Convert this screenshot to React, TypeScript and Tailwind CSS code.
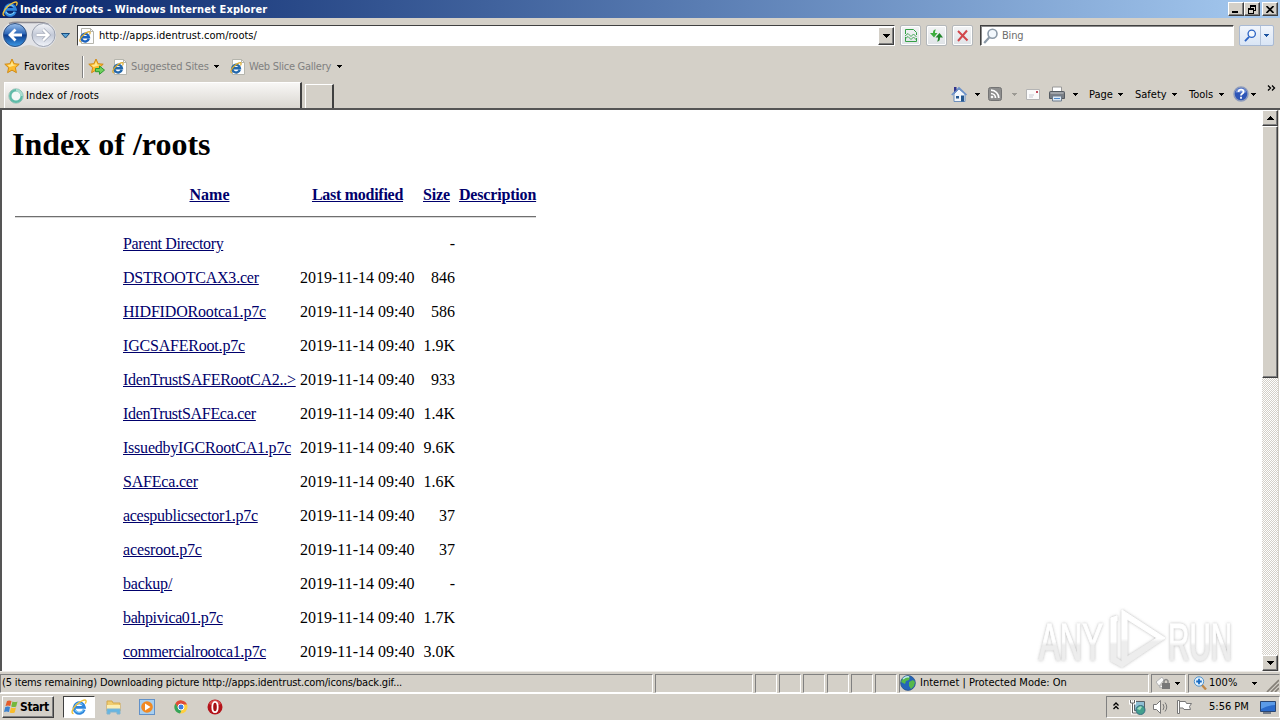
import type { ReactNode } from 'react';

interface Entry {
    name: string;
    date: string;
    size: string;
    tracking: string;
}

const entries: Entry[] = [
    { name: 'Parent Directory', date: '', size: '-', tracking: 'tracking-[-0.37px]' },
    { name: 'DSTROOTCAX3.cer', date: '2019-11-14 09:40', size: '846', tracking: 'tracking-[-0.22px]' },
    { name: 'HIDFIDORootca1.p7c', date: '2019-11-14 09:40', size: '586', tracking: 'tracking-[-0.18px]' },
    { name: 'IGCSAFERoot.p7c', date: '2019-11-14 09:40', size: '1.9K', tracking: 'tracking-[-0.2px]' },
    { name: 'IdenTrustSAFERootCA2..>', date: '2019-11-14 09:40', size: '933', tracking: 'tracking-[-0.28px]' },
    { name: 'IdenTrustSAFEca.cer', date: '2019-11-14 09:40', size: '1.4K', tracking: 'tracking-[-0.3px]' },
    { name: 'IssuedbyIGCRootCA1.p7c', date: '2019-11-14 09:40', size: '9.6K', tracking: 'tracking-[-0.22px]' },
    { name: 'SAFEca.cer', date: '2019-11-14 09:40', size: '1.6K', tracking: 'tracking-[-0.2px]' },
    { name: 'acespublicsector1.p7c', date: '2019-11-14 09:40', size: '37', tracking: 'tracking-[-0.29px]' },
    { name: 'acesroot.p7c', date: '2019-11-14 09:40', size: '37', tracking: 'tracking-[-0.13px]' },
    { name: 'backup/', date: '2019-11-14 09:40', size: '-', tracking: 'tracking-[-0.22px]' },
    { name: 'bahpivica01.p7c', date: '2019-11-14 09:40', size: '1.7K', tracking: 'tracking-[-0.37px]' },
    { name: 'commercialrootca1.p7c', date: '2019-11-14 09:40', size: '3.0K', tracking: 'tracking-[-0.36px]' },
];

const raised = 'border border-t-white border-l-white border-r-[#404040] border-b-[#404040] shadow-[inset_-1px_-1px_0_#808080] bg-[#d4d0c8]';
const sunken = 'border border-t-[#808080] border-l-[#808080] border-r-white border-b-white';

function Arrow({ className = '', color = '#000' }: { className?: string; color?: string }) {
    return (
        <svg className={`shrink-0 ${className}`} width="5" height="3" viewBox="0 0 5 3" shapeRendering="crispEdges">
            <path d="M0 0h5v1H4v1H3v1H2V2H1V1H0z" fill={color} />
        </svg>
    );
}

function IeLogo({ size = 16 }: { size?: number }) {
    return (
        <svg className="shrink-0" width={size} height={size} viewBox="0 0 16 16" fill="none">
            <path d="M13.2 10.6A5.2 5.2 0 1 1 13.4 8.4H4.6" stroke="#2f86dc" strokeWidth="2.9" />
            <path d="M12.3 11A4.7 4.7 0 0 1 4 11" stroke="#7fd0fa" strokeWidth="1.1" />
            <path d="M4.3 6.4A4.3 4.3 0 0 1 11.5 5.6" stroke="#8fd6fb" strokeWidth="1" />
            <path d="M2.6 14.6C-.4 14.4 1.4 9.5 5.5 5.7 9.4 2 14.3-.3 15 1.7c.3.8-.1 1.9-.8 3" stroke="#f0c23a" strokeWidth="1.4" />
        </svg>
    );
}

function IePage({ faded = false }: { faded?: boolean }) {
    return (
        <svg className="shrink-0" width="16" height="16" viewBox="0 0 16 16" fill="none">
            <path d="M2.5.5h9l3 3v12h-12z" fill="#fdfdfd" stroke="#b5b5ad" />
            <path d="M11.5.5v3h3" stroke="#b5b5ad" />
            <g transform="translate(0 3) scale(.74)">
                <path d="M13.2 10.6A5.2 5.2 0 1 1 13.4 8.4H4.6" stroke={faded ? '#2468ab' : '#1b62bd'} strokeWidth="3.2" />
                <path d="M2.6 14.6C-.4 14.4 1.4 9.5 5.5 5.7 9.4 2 14.3-.3 15 1.7c.3.8-.1 1.9-.8 3" stroke="#d9a92c" strokeWidth="1.6" />
            </g>
        </svg>
    );
}

function Star({ add = false }: { add?: boolean }) {
    return (
        <svg className="shrink-0" width="17" height="17" viewBox="0 0 17 17">
            <path d="M8 1l2.1 4.7 5.1.5-3.8 3.5 1 5L8 12.1l-4.4 2.6 1-5L.8 6.2l5.1-.5z" fill="#fdbb2d" stroke="#d18a14" />
            <path d="M8 3.2l1.3 3.4 3.2.3-6.9 2L3.4 7l3.2-.4z" fill="#ffe68b" />
            {add && <path d="M7.5 10.5h4V8l5 4.1-5 4.2v-2.6h-4z" fill="#6fd05c" stroke="#2d9b31" />}
        </svg>
    );
}

function Magnifier({ color, size = 16 }: { color: string; size?: number }) {
    return (
        <svg className="shrink-0" width={size} height={size} viewBox="0 0 16 16" fill="none">
            <path d="M6.2 9.6L1.2 15" stroke={color} strokeWidth="2.2" />
            <circle cx="9.5" cy="5.8" r="4.5" fill="#f3f8fd" stroke={color} strokeWidth="1.6" />
        </svg>
    );
}

function NavButton({ children }: { children: ReactNode }) {
    return (
        <div className="flex h-[21px] w-[21px] items-center justify-center rounded-[2px] border border-[#b4b8bb] bg-gradient-to-b from-[#f3f4f5] to-[#dfe3e7] shadow-[inset_0_0_0_1px_#fff]">
            {children}
        </div>
    );
}

function TitleBar() {
    return (
        <div className="flex h-[18px] items-center bg-gradient-to-r from-[#0a246a] to-[#a6caf0] pl-[2px] pr-[2px]">
            <IeLogo />
            <span className="ml-[2px] flex-1 pt-[2px] text-[11px] font-bold tracking-[0.12px] text-white">Index of /roots - Windows Internet Explorer</span>
            <div className={`flex h-[14px] w-4 items-end pb-[2px] pl-[3px] ${raised}`}>
                <div className="h-[2px] w-[6px] bg-black" />
            </div>
            <div className={`flex h-[14px] w-4 items-center justify-center ${raised}`}>
                <svg width="9" height="9" viewBox="0 0 9 9" shapeRendering="crispEdges">
                    <path d="M2 0h6v6H6V5h1V2H3v1H2zM0 3h6v6H0zM1 5v3h4V5z" fillRule="evenodd" />
                </svg>
            </div>
            <div className={`ml-[2px] flex h-[14px] w-4 items-center justify-center ${raised}`}>
                <svg width="8" height="7" viewBox="0 0 8 7">
                    <path d="M.5 0l7 7M7.5 0l-7 7" stroke="#000" strokeWidth="1.6" />
                </svg>
            </div>
        </div>
    );
}

function AddressRow() {
    return (
        <div className="flex h-[35px] items-center">
            <svg className="mb-[2px] ml-[2px] shrink-0" width="55" height="28" viewBox="0 0 55 28" fill="none">
                <defs>
                    <linearGradient id="back" x1="0" y1="0" x2="0" y2="1">
                        <stop offset="0" stopColor="#9bc0ec" />
                        <stop offset=".45" stopColor="#2c67b8" />
                        <stop offset=".5" stopColor="#0c3c8e" />
                        <stop offset="1" stopColor="#3c9be8" />
                    </linearGradient>
                    <linearGradient id="fwd" x1="0" y1="0" x2="0" y2="1">
                        <stop offset="0" stopColor="#f4f6fa" />
                        <stop offset=".5" stopColor="#c3c9d7" />
                        <stop offset="1" stopColor="#f2f5fb" />
                    </linearGradient>
                </defs>
                <path d="M13 1h28a13 13 0 0 1 0 26c-7 0-9-3-14-3s-7 3-14 3a13 13 0 0 1 0-26z" fill="#e2e3e7" />
                <path d="M7 2.3Q12 .8 20 1.5h14q8-.7 13 2" stroke="#8e8c93" strokeWidth="1.4" />
                <circle cx="13" cy="14" r="11.5" fill="url(#back)" stroke="#315180" />
                <circle cx="41.5" cy="14" r="11.5" fill="url(#fwd)" stroke="#9ba1af" />
                <path d="M20 14H8.5M13.5 8.5L8 14l5.5 5.5" stroke="#fff" strokeWidth="2.8" />
                <path d="M34.5 14H46M41 8.5l5.5 5.5-5.5 5.5" stroke="#9ca2b1" strokeWidth="3.6" />
                <path d="M34.5 14H46M41 8.5l5.5 5.5-5.5 5.5" stroke="#fff" strokeWidth="2.4" />
            </svg>
            <svg className="ml-[4px] shrink-0" width="9" height="6" viewBox="0 0 9 6">
                <path d="M.5.5h8l-4 4.5z" fill="#5ba2d4" stroke="#174b7d" />
            </svg>
            <div className="ml-[7px] flex h-[21px] w-[818px] items-center border border-b-white border-l-[#404040] border-r-white border-t-[#404040] bg-white pl-[1px]">
                <IePage />
                <span className="ml-[4px] flex-1 pt-[2px] text-[11px]">http://apps.identrust.com/roots/</span>
                <div className={`flex h-[18px] w-[16px] items-center justify-center ${raised}`}>
                    <svg width="7" height="4" viewBox="0 0 7 4" shapeRendering="crispEdges">
                        <path d="M0 0h7v1H6v1H5v1H4v1H3V3H2V2H1V1H0z" />
                    </svg>
                </div>
            </div>
            <div className="ml-[5px] flex gap-[5px]">
                <NavButton>
                    <svg width="14" height="15" viewBox="0 0 14 15" fill="none" stroke="#35a046">
                        <path d="M1.5 6V1.5h8l3 3V7M1.5 9v4.5h11V10" />
                        <path d="M1 8l3-2.500L7 8.5 9.5 6l3 3M1 11l3-2.500 3 3L9.5 9l3 3" strokeWidth=".9" />
                    </svg>
                </NavButton>
                <NavButton>
                    <svg width="15" height="15" viewBox="0 0 15 15">
                        <path d="M7 1.5C4.5 1.5 4 3 4 5H1l4 4.5L8.500 5H6c0-2 .3-2.500 1-3.500z" fill="#3eae3e" />
                        <path d="M8 13.5c2.5 0 3-1.500 3-4h3L10.500 5 6.500 9.500H9c0 2-.3 3-1 4z" fill="#23862c" />
                    </svg>
                </NavButton>
                <NavButton>
                    <svg width="13" height="13" viewBox="0 0 13 13" fill="none">
                        <path d="M2 2l9.500 9.500M11 1.500L2 12" stroke="#d2474b" strokeWidth="2" />
                    </svg>
                </NavButton>
            </div>
            <div className="ml-[7px] flex h-[21px] w-[254px] items-center border border-b-white border-l-[#404040] border-r-white border-t-[#404040] bg-white pl-[2px] shadow-[inset_1px_1px_0_#8a8a8a]">
                <Magnifier color="#8c9aa8" />
                <span className="ml-[3px] pt-[2px] text-[11px] tracking-[-0.2px] text-[#6d6d6d]">Bing</span>
            </div>
            <div className="ml-[5px] flex h-[21px] w-[35px] items-center rounded-[2px] border border-[#a9bad4] bg-gradient-to-b from-[#f1f5fb] to-[#d9e5f5]">
                <div className="flex h-full w-[21px] items-center justify-center border-r border-[#b3c3da]">
                    <Magnifier color="#2b63c4" size={13} />
                </div>
                <Arrow className="ml-[3px]" color="#1e54a0" />
            </div>
        </div>
    );
}

function FavoritesRow() {
    return (
        <div className="flex h-[27px] items-center pl-[4px] text-[11px]">
            <Star />
            <span className="ml-[3px] w-[46px] whitespace-nowrap pt-[1px] tracking-[0.1px]">Favorites</span>
            <div className="ml-[12px] h-[22px] w-[2px] border-l border-r border-l-[#808080] border-r-white" />
            <div className="ml-[4px] flex items-center">
                <Star add />
            </div>
            <div className="ml-[7px] flex items-center">
                <IePage faded />
                <span className="ml-[3px] w-[79px] whitespace-nowrap pt-[2px] tracking-[-0.15px] text-[#808080]">Suggested Sites</span>
                <Arrow className="ml-[4px]" />
            </div>
            <div className="ml-[11px] flex items-center">
                <IePage faded />
                <span className="ml-[3px] w-[84px] whitespace-nowrap pt-[2px] tracking-[-0.25px] text-[#808080]">Web Slice Gallery</span>
                <Arrow className="ml-[4px]" />
            </div>
        </div>
    );
}

function TabRow() {
    return (
        <div className="flex h-[28px] items-end pl-[4px] text-[11px]">
            <div className="flex h-[26px] w-[298px] items-center border-l border-r-2 border-t border-l-white border-r-[#404040] border-t-white bg-gradient-to-b from-[#f8f7f6] to-[#dad7d1] pl-[3px]">
                <svg width="16" height="16" viewBox="0 0 16 16" fill="none">
                    <circle cx="8" cy="8" r="7.2" fill="#f3f8f6" stroke="#8db5ab" strokeWidth=".8" />
                    <circle cx="8" cy="8" r="5.7" stroke="#5fbba8" strokeWidth="2.4" />
                    <path d="M8 2.300A5.700 5.700 0 0 1 13.700 8" stroke="#a9dccf" strokeWidth="2.4" />
                </svg>
                <span className="ml-[2px] pt-[2px] tracking-[0.12px]">Index of /roots</span>
            </div>
            <div className="ml-[3px] h-[24px] w-[29px] border-l border-r-2 border-t border-l-white border-r-[#404040] border-t-white" />
            <div className="ml-[617px] flex h-full flex-1 items-center">
                <svg width="17" height="17" viewBox="0 0 17 17">
                    <path d="M3 8l5-5 6 5v7.500H3z" fill="#f2f6fb" stroke="#6d8fbd" />
                    <path d="M.8 9L8 2l7.500 7" fill="none" stroke="#6c92ca" strokeWidth="1.7" />
                    <path d="M3 1h2.500v3L3 6z" fill="#32338c" />
                    <path d="M5 10h3v2.500H5zM10 9.500h3v6h-3z" fill="#24578f" />
                </svg>
                <Arrow className="ml-[7px]" />
                <svg className="ml-[8px]" width="14" height="14" viewBox="0 0 14 14" fill="none" stroke="#fff" strokeWidth="1.7">
                    <rect x=".5" y=".5" width="13" height="13" rx="2" fill="#8e8e8e" stroke="#747474" strokeWidth="1" />
                    <path d="M3 6.500A4.500 4.500 0 0 1 7.500 11M3 3.200A7.800 7.800 0 0 1 10.800 11" />
                    <circle cx="4" cy="10" r=".5" />
                </svg>
                <Arrow className="ml-[10px]" color="#9c9a94" />
                <svg className="ml-[9px]" width="14" height="11" viewBox="0 0 14 11">
                    <path d="M.5.5h13v10H.5z" fill="#fbfbfb" stroke="#b4b4b4" />
                    <path d="M10 2h2v2h-2z" fill="#c34e60" />
                    <path d="M3 6h5M3 8h4" stroke="#c9c9d2" />
                </svg>
                <svg className="ml-[9px]" width="16" height="16" viewBox="0 0 16 16">
                    <path d="M3.5 6V1h9v5" fill="#fff" stroke="#999" />
                    <path d="M.5 6.500q0-1 1-1h13q1 0 1 1v6H.5z" fill="#797e85" stroke="#555b62" />
                    <path d="M1.5 7h13" stroke="#c7cacd" />
                    <path d="M3.5 10h9v5h-9z" fill="#dce9f5" stroke="#6e7b8a" />
                    <path d="M5 12.5h6" stroke="#4f8acb" />
                </svg>
                <Arrow className="ml-[8px]" />
                <span className="ml-[11px] w-[24px] whitespace-nowrap pt-[2px]">Page</span>
                <Arrow className="ml-[5px]" />
                <span className="ml-[12px] w-[32px] whitespace-nowrap pt-[2px]">Safety</span>
                <Arrow className="ml-[5px]" />
                <span className="ml-[12px] w-[25px] whitespace-nowrap pt-[2px]">Tools</span>
                <Arrow className="ml-[5px]" />
                <svg className="ml-[9px]" width="16" height="16" viewBox="0 0 16 16">
                    <circle cx="8" cy="8" r="7" fill="#2e55b7" stroke="#8d9bbc" strokeWidth="1.5" />
                    <path d="M2.5 6.500a5.700 5.700 0 0 1 11 0z" fill="#7594da" />
                    <path d="M5.5 6q.2-2.300 2.600-2.300T10.600 6C10.600 7.700 8 7.500 8 9.600M8 10.800v1.900" fill="none" stroke="#fff" strokeWidth="1.8" />
                </svg>
                <Arrow className="ml-[2px]" />
                <svg className="mb-[13px] ml-[11px]" width="9" height="6" viewBox="0 0 9 6" fill="none" stroke="#000" strokeWidth="1.3">
                    <path d="M1 .5L3.500 3 1 5.500M5 .5L7.500 3 5 5.500" />
                </svg>
            </div>
        </div>
    );
}

function ScrollButton({ up = false }: { up?: boolean }) {
    return (
        <div className={`flex h-4 w-4 items-center justify-center ${raised}`}>
            <svg className={up ? 'rotate-180' : ''} width="7" height="4" viewBox="0 0 7 4" shapeRendering="crispEdges">
                <path d="M0 0h7v1H6v1H5v1H4v1H3V3H2V2H1V1H0z" />
            </svg>
        </div>
    );
}

function Watermark() {
    return (
        <svg className="absolute bottom-0 right-[22px]" width="208" height="65" viewBox="0 0 208 65">
            <defs>
                <filter id="soft" x="-10%" y="-10%" width="120%" height="120%">
                    <feDropShadow dx="0" dy="0" stdDeviation="1.8" floodColor="#777" floodOpacity=".55" />
                </filter>
                <linearGradient id="mark" x1="0" y1="0" x2="0" y2="1">
                    <stop offset=".5" stopColor="#fff" />
                    <stop offset=".56" stopColor="#ededed" />
                </linearGradient>
            </defs>
            <g filter="url(#soft)" fill="url(#mark)" fontFamily="Liberation Sans" fontSize="52" stroke="url(#mark)">
                <text transform="translate(7 54) scale(.6 1)">ANY</text>
                <text transform="translate(136 54) scale(.57 1)">RUN</text>
                <path d="M90 4l43 28-43 29zM95 13v38l30-19z" fillRule="evenodd" />
                <path d="M85 10l-6 2v43l11 6v-5l-6-4V15h1z" />
            </g>
        </svg>
    );
}

function Page() {
    return (
        <div className="relative flex-1 overflow-hidden bg-white pl-[10px] pt-[16px] font-['Liberation_Serif',serif] text-base leading-[18px] text-black">
            <h1 className="text-[32px] font-bold leading-[37px]">Index of /roots</h1>
            <div className="ml-[3px] w-[521px]">
                <div className="mt-[23px] grid grid-cols-[108px_173px_4px_115px_8px_36px_77px] whitespace-nowrap font-bold text-[#00006c]">
                    <span className="col-start-2 text-center underline">Name</span>
                    <span className="col-start-4 text-center tracking-[-0.28px] underline">Last modified</span>
                    <span className="col-start-6 tracking-[-0.15px] underline">Size</span>
                    <span className="tracking-[-0.18px] underline">Description</span>
                </div>
                <div className="mb-[17px] mt-[12px] h-[2px] border-b border-t border-b-[#d8d8d8] border-t-[#6f6f6f]" />
                {entries.map((entry) => (
                    <div key={entry.name} className="mb-4 grid grid-cols-[108px_173px_4px_115px_8px_32px] whitespace-nowrap">
                        <span className={`col-start-2 text-[#00006c] underline ${entry.tracking}`}>{entry.name}</span>
                        <span className="col-start-4">{entry.date}</span>
                        <span className="col-start-6 text-right">{entry.size}</span>
                    </div>
                ))}
            </div>
            <Watermark />
        </div>
    );
}

function StatusBar() {
    return (
        <div className="flex h-[22px] items-center gap-[2px] border-t border-[#eeece8] pt-[1px] text-[11px]">
            <div className={`flex h-[19px] w-[653px] items-center pl-[1px] ${sunken}`}>
                <span className="whitespace-nowrap pt-[1px] tracking-[-0.15px]">(5 items remaining) Downloading picture http://apps.identrust.com/icons/back.gif...</span>
            </div>
            <div className={`h-[19px] w-[98px] ${sunken}`} />
            {[0, 1, 2, 3, 4, 5].map((pane) => (
                <div key={pane} className={`h-[19px] w-[22px] ${sunken}`} />
            ))}
            <div className={`flex h-[19px] w-[250px] items-center ${sunken}`}>
                <svg width="16" height="16" viewBox="0 0 16 16">
                    <circle cx="8" cy="8" r="7.4" fill="#2465b8" stroke="#254b83" strokeWidth=".7" />
                    <path d="M3 3q4-3 7-1L9 5 6 6 5 9 1 7zM9 7l4-2 2 2-1 4-3 3-2-3z" fill="#55b84a" />
                    <path d="M3 4q3-3 6-2" fill="none" stroke="#bfe7f4" strokeWidth="1.5" />
                </svg>
                <span className="ml-[4px] whitespace-nowrap pt-[1px]">Internet | Protected Mode: On</span>
            </div>
            <div className={`flex h-[19px] w-[35px] items-center pl-[3px] ${sunken}`}>
                <svg width="16" height="16" viewBox="0 0 16 16">
                    <path d="M1 7l6-5 2 3-5 6zM4 12l4-3v4z" fill="#fafafa" stroke="#b3b3b3" />
                    <path d="M7 8h8v6H7z" fill="#777" />
                    <path d="M9 8V6q2-3 4 0v2" fill="none" stroke="#858585" strokeWidth="1.5" />
                </svg>
                <Arrow className="ml-[4px]" />
            </div>
            <div className="flex h-[19px] flex-1 items-center border border-b-white border-l-[#808080] border-r-transparent border-t-[#808080] pl-[4px]">
                <svg width="14" height="14" viewBox="0 0 14 14" fill="none">
                    <path d="M8.5 8.500l4.500 5" stroke="#c18747" strokeWidth="2.3" />
                    <circle cx="6" cy="5.5" r="4.7" fill="#e3f1fc" stroke="#4d91cc" />
                    <path d="M3.2 5.500h5.600M6 2.700v5.600" stroke="#176ac2" strokeWidth="1.8" />
                </svg>
                <span className="ml-[2px] w-[29px] whitespace-nowrap pt-[1px]">100%</span>
                <Arrow className="ml-[14px]" />
                <svg className="ml-auto self-end" width="13" height="13" viewBox="0 0 13 13">
                    <path d="M1 13L13 1M5 13l8-8M9 13l4-4" stroke="#858078" strokeWidth="1.7" />
                </svg>
            </div>
        </div>
    );
}

function Taskbar() {
    return (
        <div className="flex h-[27px] items-center border-t border-white text-[11px]">
            <div className={`ml-[2px] flex h-[22px] w-[52px] items-center pl-[1px] ${raised}`}>
                <svg width="16" height="16" viewBox="0 0 16 16">
                    <path d="M3 2q2-1 4.500 0L6.300 7Q4 6 1.500 7z" fill="#e45c2b" />
                    <path d="M8.5 2.500q2.500 1.200 5 0L12.200 7.500q-2.500 1-5 0z" fill="#75b83d" />
                    <path d="M1.3 8Q4 7 6 8L5 13Q2.500 12 0 13z" fill="#3c82cf" />
                    <path d="M7 8.500q2.500 1.200 5 0L10.700 13.500q-2.500 1-5 0z" fill="#f9bd2c" />
                </svg>
                <span className="text-[12px] font-bold tracking-[-0.4px]">Start</span>
            </div>
            <div className="ml-[9px] flex h-[22px] w-[32px] items-center justify-center border border-b-white border-l-[#404040] border-r-white border-t-[#404040] bg-white">
                <IeLogo />
            </div>
            <svg className="ml-[10px]" width="17" height="17" viewBox="0 0 17 17">
                <path d="M2 2h5l1 2h7v8H2z" fill="#f0cd6f" stroke="#d2a74c" />
                <path d="M2 6h13v4H2z" fill="#fbeeb3" />
                <path d="M2 15v-5h13v5h-3v-2H5v2z" fill="#64b6e4" stroke="#81b3cd" />
            </svg>
            <svg className="ml-[17px]" width="16" height="16" viewBox="0 0 16 16">
                <rect x=".5" y=".5" width="15" height="15" fill="#a7cff0" stroke="#6291c8" />
                <circle cx="8" cy="8" r="5.8" fill="#f18922" />
                <path d="M6 4.500L11.500 8 6 11.500z" fill="#fff" />
            </svg>
            <svg className="ml-[19px]" width="14" height="14" viewBox="0 0 14 14">
                <circle cx="7" cy="7" r="6.5" fill="#ffcf3e" />
                <path d="M1.4 3.500A6.500 6.500 0 0 1 13 4.500H7L4.500 9z" fill="#df4b39" />
                <path d="M1.4 3.500L5 9l2.500 1.500-1.500 3A6.500 6.500 0 0 1 1.400 3.500z" fill="#35a45b" />
                <circle cx="7" cy="7" r="3" fill="#3e7de0" stroke="#fff" />
            </svg>
            <svg className="ml-[19px]" width="16" height="16" viewBox="0 0 16 16">
                <circle cx="8" cy="8" r="7.5" fill="#b4131a" />
                <path d="M2 5q2-4 6-4t6 4q-6 3-12 0z" fill="#d9494b" />
                <ellipse cx="8" cy="8" rx="2.7" ry="5.2" fill="#a60f14" stroke="#fff" strokeWidth="1.8" />
            </svg>
            <div className={`ml-auto flex h-[22px] w-[174px] items-center pl-[6px] ${sunken}`}>
                <svg className="mb-[2px]" width="6" height="8" viewBox="0 0 6 8" fill="none" stroke="#000" strokeWidth="1.3">
                    <path d="M.5 3.500L3 1l2.500 2.500M.5 7L3 4.500 5.500 7" />
                </svg>
                <svg className="ml-[10px]" width="17" height="16" viewBox="0 0 17 16">
                    <path d="M5.5 2.500h10v9h-10z" fill="#8fbfd4" stroke="#5a6269" />
                    <path d="M1.5 1v3h4V1M3.500 4v10H8" fill="none" stroke="#fff" strokeWidth="3" />
                    <path d="M1.5 1v3h4V1M3.500 4v10H8" fill="none" stroke="#616161" />
                    <circle cx="11.5" cy="11" r="4.5" fill="#43a08d" stroke="#397084" />
                    <path d="M8 10q3-4 5-2l-2 3z" fill="#a1dcc0" />
                </svg>
                <svg className="ml-[6px]" width="18" height="16" viewBox="0 0 18 16" fill="none" stroke="#777">
                    <path d="M1.5 5.500h3l4-4v13l-4-4h-3z" fill="#fff" />
                    <path d="M11 5q2 3 0 6M13 3.500q3.500 4.500 0 9" />
                </svg>
                <svg className="ml-[6px]" width="17" height="16" viewBox="0 0 17 16">
                    <path d="M3.5 2.500h6l1 2h5l-2 3 1 3H8l-1-1.500H3.500z" fill="#fff" stroke="#777" />
                    <path d="M1.5 1.500h2v13h-2z" fill="#fff" stroke="#777" />
                </svg>
                <span className="ml-[16px] w-[39px] whitespace-nowrap pt-[1px]">5:56 PM</span>
                <svg className="ml-[12px]" width="16" height="14" viewBox="0 0 16 14">
                    <path d="M.5 1.500h15v10H.5z" fill="#2b6bcb" stroke="#294673" />
                    <path d="M1 2h14v3Q9 5 1 9z" fill="#5b9be8" />
                    <path d="M3 13h8" stroke="#747c89" strokeWidth="2" />
                </svg>
            </div>
        </div>
    );
}

export default function App() {
    return (
        <div className="flex h-[720px] w-[1280px] flex-col overflow-hidden bg-[#d4d0c8] font-['DejaVu_Sans_Condensed','DejaVu_Sans',sans-serif] text-black [font-stretch:condensed]">
            <TitleBar />
            <AddressRow />
            <FavoritesRow />
            <TabRow />
            <div className="flex h-[563px] border-l-2 border-t-2 border-l-[#555] border-t-[#555]">
                <Page />
                <div className="flex w-4 flex-col bg-[repeating-conic-gradient(#d4d0c8_0_25%,#fff_0_50%)] bg-[length:2px_2px]">
                    <ScrollButton up />
                    <div className={`h-[252px] ${raised}`} />
                    <div className="flex-1" />
                    <ScrollButton />
                </div>
                <div className="w-[2px] border-r border-white bg-[#d4d0c8]" />
            </div>
            <StatusBar />
            <Taskbar />
        </div>
    );
}
